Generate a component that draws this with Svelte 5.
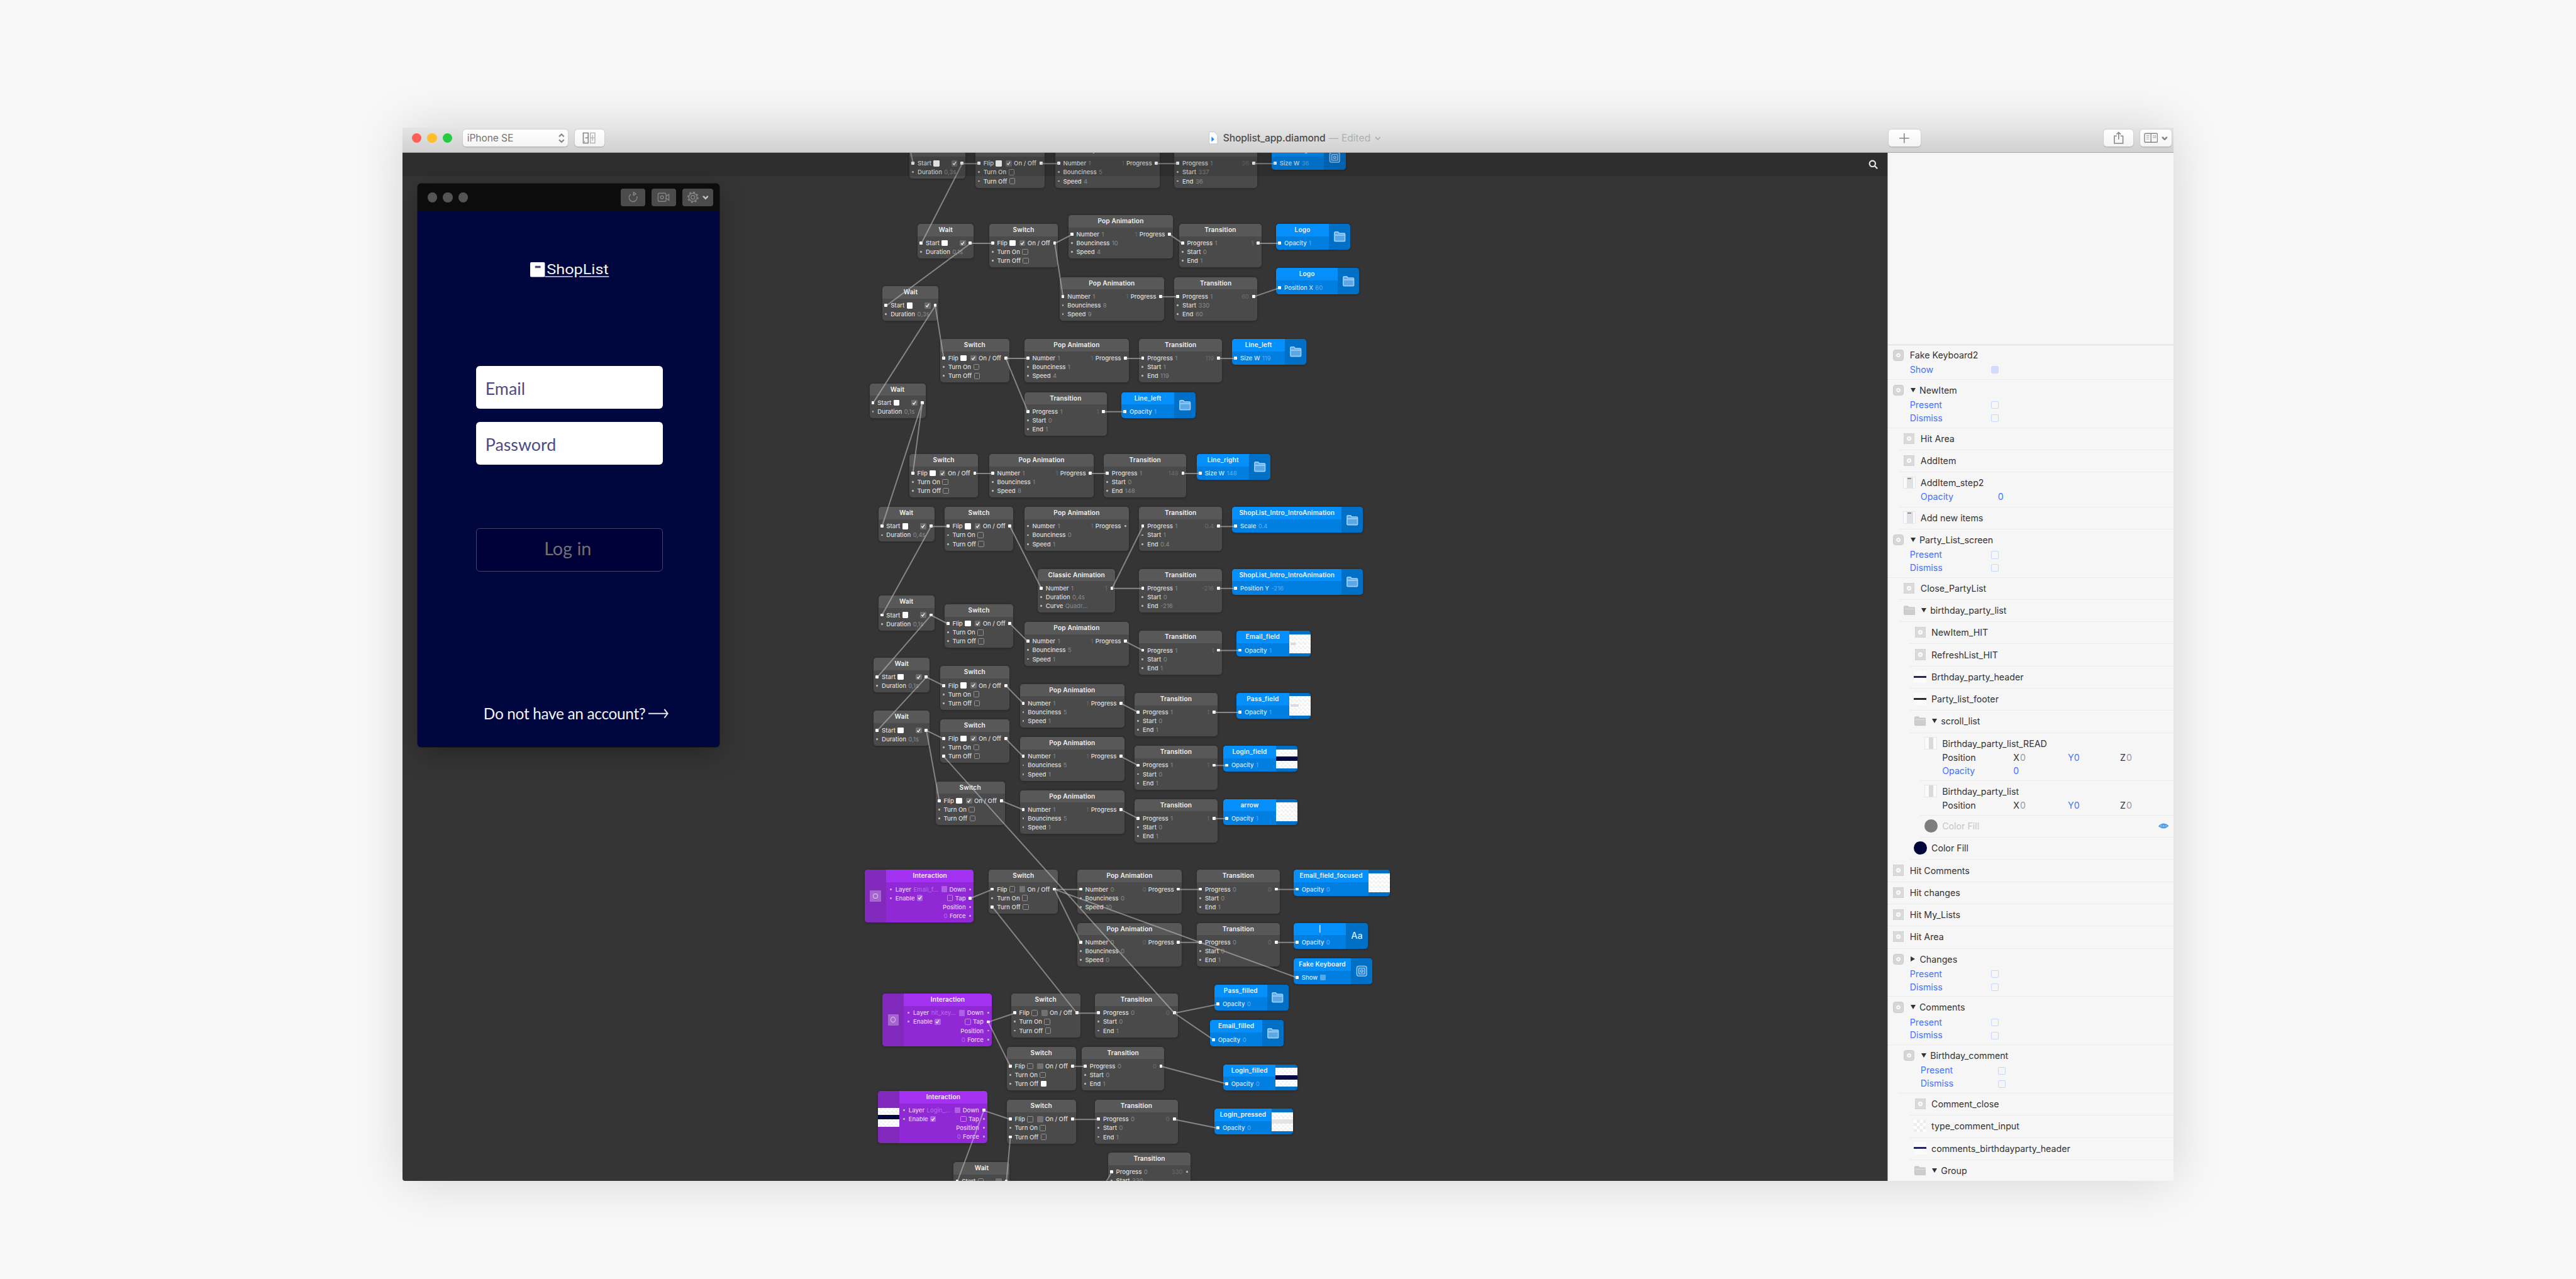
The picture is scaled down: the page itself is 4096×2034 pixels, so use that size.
<script>
  const ROW = 14.43;
  const FIRST = 31.7;
  const WIDTHS = { wait: 91.2, switch: 112.5, pop: 170.8, trans: 134.8, classic: 126.5, inter: 177.8 };

  const box = (id, kind, title, x, y, ins, outs) => ({ id, kind, title, x, y, w: WIDTHS[kind], ins, outs });
  const wait = (id, x, y, dur, start = 'on', out = 'check') =>
    box(id, 'wait', 'Wait', x, y, [{ l: 'Start', b: start }, { l: 'Duration', v: dur }], [{ b: out }]);
  const sw = (id, x, y, flip = 'on', out = 'check', off = 'off') =>
    box(id, 'switch', 'Switch', x, y, [{ l: 'Flip', b: flip }, { l: 'Turn On', b: 'off' }, { l: 'Turn Off', b: off }], [{ b: out, l: 'On / Off' }]);
  const idle = (id, x, y, off) => sw(id, x, y, 'off', 'gray', off);
  const pop = (id, x, y, n, bounce, speed) =>
    box(id, 'pop', 'Pop Animation', x, y, [{ l: 'Number', v: n }, { l: 'Bounciness', v: bounce }, { l: 'Speed', v: speed }], [{ v: n, l: 'Progress' }]);
  const trans = (id, x, y, p, start, end, out) =>
    box(id, 'trans', 'Transition', x, y, [{ l: 'Progress', v: p }, { l: 'Start', v: start }, { l: 'End', v: end }], [{ v: out }]);
  const inter = (id, x, y, layer, icon) => ({
    ...box(id, 'inter', 'Interaction', x, y,
      [{ l: 'Layer', v: layer }, { l: 'Enable', b: 'check' }],
      [{ b: 'gray', l: 'Down' }, { b: 'off', l: 'Tap' }, { l: 'Position' }, { v: '0', l: 'Force' }]),
    icon
  });
  const layer = (id, x, y, title, l, v, icon = 'folder', w = 120.5, b = undefined) =>
    ({ id, kind: 'layer', title, x, y, w, ins: [{ l, v, b }], outs: [], icon });

  const nodes = [
    wait('w0', 1483, 235, '0,3s'), sw('s0', 1590.4, 235), pop('p0', 1720.4, 235, '1', '5', '4'),
    trans('t0', 1914.8, 235, '1', '337', '36', '36'), layer('b0', 2073.4, 235, 'Rectangle', 'Size W', '36', 'frame'),

    wait('w1', 1496.4, 365, '0,1s'), sw('s1', 1612.7, 365), pop('p1', 1741.8, 350.7, '1', '10', '4'),
    trans('t1', 1922.3, 365, '1', '0', '1', '1'), layer('b1', 2080.9, 365, 'Logo', 'Opacity', '1'),
    pop('p2', 1727.3, 452, '1', '8', '9'), trans('t2', 1914.8, 452, '1', '330', '60', '60'),
    layer('b2', 2080.9, 437.3, 'Logo', 'Position X', '60', 'folder', 135),

    wait('w2', 1439.1, 466.7, '0,3s'), sw('s3', 1532.9, 552.7), pop('p3', 1670, 552.7, '1', '1', '4'),
    trans('t3', 1857.5, 552.7, '1', '1', '119', '119'), layer('b3', 2009.1, 552.7, 'Line_left', 'Size W', '119'),
    trans('t4', 1670, 639.5, '1', '0', '1', '1'), layer('b4', 1828.6, 639.5, 'Line_left', 'Opacity', '1'),

    wait('w3', 1417.7, 625.3, '0,1s'), sw('s5', 1482.5, 740.3), pop('p5', 1612.7, 740.3, '1', '1', '8'),
    trans('t5', 1799.6, 740.3, '1', '0', '148', '148'), layer('b5', 1951.3, 740.3, 'Line_right', 'Size W', '148'),

    wait('wE', 1432.1, 826.7, '0,4s'), sw('sE', 1539.8, 826.7), pop('pE', 1670, 826.7, '1', '0', '1'),
    trans('tE', 1857.5, 826.7, '1', '1', '0.4', '0.4'),
    layer('bE', 2009.1, 826.7, 'ShopList_Intro_IntroAnimation', 'Scale', '0.4', 'folder', 213.2),
    box('cF', 'classic', 'Classic Animation', 1692, 927.7, [{ l: 'Number', v: '1' }, { l: 'Duration', v: '0,4s' }, { l: 'Curve', v: 'Quadr...' }], [{ v: '1' }]),
    trans('tF', 1857.5, 927.7, '1', '0', '-216', '-216'),
    layer('bF', 2009.1, 927.7, 'ShopList_Intro_IntroAnimation', 'Position Y', '-216', 'folder', 213.2),

    wait('w4', 1432.1, 971.4, '0,1s'), sw('s4', 1539.8, 985.5), pop('p4', 1670, 1014.3, '1', '5', '1'),
    trans('t4b', 1857.5, 1028.8, '1', '0', '1', '1'), layer('b4b', 2016.1, 1028.8, 'Email_field', 'Opacity', '1', 'email'),

    wait('w5', 1424.6, 1072.4, '0,1s'), sw('s5b', 1532.9, 1086.3), pop('p5b', 1662.7, 1115.4, '1', '5', '1'),
    trans('t5b', 1850, 1129.8, '1', '0', '1', '1'), layer('b5b', 2016.1, 1129.8, 'Pass_field', 'Opacity', '1', 'pass'),

    wait('w6', 1424.6, 1159.2, '0,1s'), sw('s6', 1532.9, 1173), pop('p6', 1662.7, 1202, '1', '5', '1'),
    trans('t6', 1850, 1216.4, '1', '0', '1', '1'), layer('b6', 1994.6, 1216.4, 'Login_field', 'Opacity', '1', 'band'),
    sw('s7', 1525.6, 1274.1), pop('p7', 1662.7, 1288.6, '1', '5', '1'),
    trans('t7', 1850, 1303, '1', '0', '1', '1'), layer('b7', 1994.6, 1303, 'arrow', 'Opacity', '1', 'empty'),

    inter('i1', 1409.9, 1418.5, 'Email_f...', 'hit'), idle('sG', 1612.4, 1418.5), pop('pG', 1756.2, 1418.5, '0', '0', '10'),
    trans('tG', 1951.5, 1418.5, '0', '0', '1', '0'),
    layer('bG', 2109.3, 1418.5, 'Email_field_focused', 'Opacity', '0', 'empty', 157),
    pop('pH', 1756.2, 1505, '0', '0', '0'), trans('tH', 1951.5, 1505, '0', '0', '1', '0'),
    layer('bH', 2109.3, 1505, '|', 'Opacity', '0', 'text'),
    layer('kb', 2109.3, 1562.6, 'Fake Keyboard', 'Show', '', 'frame', 128.2, 'gray'),

    layer('pf', 1980.2, 1605.8, 'Pass_filled', 'Opacity', '0'), layer('ef', 1972.8, 1663.7, 'Email_filled', 'Opacity', '0'),
    inter('i2', 1438.9, 1620.3, 'hit_key...', 'hit'), idle('s9', 1648.7, 1620.3), trans('t9', 1785.4, 1620.3, '0', '0', '1', '0'),
    idle('s10', 1641.5, 1707, 'on'), trans('t10', 1763.7, 1707, '0', '0', '1', '0'),
    layer('b10', 1994.4, 1735.7, 'Login_filled', 'Opacity', '0', 'band'),

    inter('i3', 1431.6, 1779.1, 'Login_...', 'band'), idle('s11', 1641.5, 1793.6), trans('t11', 1785.4, 1793.6, '0', '0', '1', '0'),
    layer('b11', 1980.2, 1808, 'Login_pressed', 'Opacity', '0', 'pale', 128),
    wait('w12', 1555, 1894.9, '0,2s', 'off', 'gray'), trans('t12', 1806.6, 1879.6, '0', '330', '0', '330')
  ];

  /* [source, output row, target, input row] */
  const links = [
    ['w0', 0, 's0', 0], ['w0', 0, 'w1', 0], ['s0', 0, 'p0', 0], ['p0', 0, 't0', 0], ['t0', 0, 'b0', 0],
    ['w1', 0, 's1', 0], ['w1', 0, 'w2', 0], ['s1', 0, 'p1', 0], ['p1', 0, 't1', 0], ['t1', 0, 'b1', 0],
    ['s1', 0, 'p2', 0], ['p2', 0, 't2', 0], ['t2', 0, 'b2', 0],
    ['w2', 0, 's3', 0], ['w2', 0, 'w3', 0], ['s3', 0, 'p3', 0], ['p3', 0, 't3', 0], ['t3', 0, 'b3', 0],
    ['s3', 0, 't4', 0], ['t4', 0, 'b4', 0],
    ['w3', 0, 's5', 0], ['w3', 0, 'wE', 0], ['s5', 0, 'p5', 0], ['p5', 0, 't5', 0], ['t5', 0, 'b5', 0],
    ['wE', 0, 'sE', 0], ['wE', 0, 'w4', 0], ['sE', 0, 'cF', 0], ['cF', 0, 'tE', 0], ['cF', 0, 'tF', 0],
    ['tE', 0, 'bE', 0], ['tF', 0, 'bF', 0],
    ['w4', 0, 's4', 0], ['w4', 0, 'w5', 0], ['s4', 0, 'p4', 0], ['p4', 0, 't4b', 0], ['t4b', 0, 'b4b', 0],
    ['w5', 0, 's5b', 0], ['w5', 0, 'w6', 0], ['s5b', 0, 'p5b', 0], ['p5b', 0, 't5b', 0], ['t5b', 0, 'b5b', 0],
    ['w6', 0, 's6', 0], ['w6', 0, 's7', 0], ['s6', 0, 'p6', 0], ['p6', 0, 't6', 0], ['t6', 0, 'b6', 0],
    ['s7', 0, 'p7', 0], ['p7', 0, 't7', 0], ['t7', 0, 'b7', 0], ['t9', 0, 's6', 2],
    ['i1', 1, 'sG', 0], ['sG', 0, 'pG', 0], ['pG', 0, 'tG', 0], ['tG', 0, 'bG', 0], ['sG', 0, 'pH', 0],
    ['sG', 0, 'kb', 0], ['pH', 0, 'tH', 0], ['tH', 0, 'bH', 0], ['s9', 0, 'sG', 2],
    ['i2', 1, 's9', 0], ['i2', 1, 's10', 0], ['s9', 0, 't9', 0], ['t9', 0, 'pf', 0], ['t9', 0, 'ef', 0],
    ['s10', 0, 't10', 0], ['t10', 0, 'b10', 0],
    ['i3', 0, 's11', 0], ['i3', 0, 'w12', 0], ['s11', 0, 't11', 0], ['t11', 0, 'b11', 0], ['w12', 0, 's11', 2]
  ];

  const OX = 656, OY = 249;
  const byId = Object.fromEntries(nodes.map((n) => [n.id, n]));
  const lit = new Set(['w0:in:0', 't12:in:0']);
  for (const [a, ar, b, br] of links) { lit.add(`${a}:out:${ar}`); lit.add(`${b}:in:${br}`); }
  const inX = (n) => n.x + (n.kind === 'inter' ? 43 : 5.6);
  const wires = links.map(([a, ar, b, br]) => {
    const s = byId[a], t = byId[b];
    return [s.x + s.w - 5.6 - OX, s.y + FIRST + ar * ROW - OY, inX(t) - OX, t.y + FIRST + br * ROW - OY];
  });
  wires.push([1481 - OX, -18, 1488.6 - OX, 235 + FIRST - OY]);
  wires.push([1790 - OX, 1950 - OY, 1812.2 - OX, 1879.6 + FIRST - OY]);

  const nodeHeight = (n) => 27.8 + ROW * Math.max(n.ins.length, n.outs.length);
  const PD = [{ l: 'Present', box: 'off', blue: true }, { l: 'Dismiss', box: 'off', blue: true }];
  const XYZ = { l: 'Position', xyz: true };
  const OP = { l: 'Opacity', v: '0', blue: true };
  const layers = [
    { d: 0, i: 'frame', t: 'Fake Keyboard2', p: [{ l: 'Show', box: 'fill', blue: true }] },
    { d: 0, i: 'frame', t: 'NewItem', a: 'open', p: PD },
    { d: 1, i: 'hit', t: 'Hit Area' },
    { d: 1, i: 'hit', t: 'AddItem' },
    { d: 1, i: 'sheet', t: 'AddItem_step2', p: [OP] },
    { d: 1, i: 'sheet', t: 'Add new items' },
    { d: 0, i: 'frame', t: 'Party_List_screen', a: 'open', p: PD },
    { d: 1, i: 'hit', t: 'Close_PartyList' },
    { d: 1, i: 'folder', t: 'birthday_party_list', a: 'open' },
    { d: 2, i: 'hit', t: 'NewItem_HIT' },
    { d: 2, i: 'hit', t: 'RefreshList_HIT' },
    { d: 2, i: 'navy', t: 'Brthday_party_header' },
    { d: 2, i: 'dark', t: 'Party_list_footer' },
    { d: 2, i: 'folder', t: 'scroll_list', a: 'open' },
    { d: 3, i: 'column', t: 'Birthday_party_list_READ', p: [XYZ, OP] },
    { d: 3, i: 'column', t: 'Birthday_party_list', p: [XYZ] },
    { d: 3, i: 'gray', t: 'Color Fill', hidden: true },
    { d: 2, i: 'ink', t: 'Color Fill' },
    { d: 0, i: 'hit', t: 'Hit Comments' },
    { d: 0, i: 'hit', t: 'Hit changes' },
    { d: 0, i: 'hit', t: 'Hit My_Lists' },
    { d: 0, i: 'hit', t: 'Hit Area' },
    { d: 0, i: 'frame', t: 'Changes', a: 'closed', p: PD },
    { d: 0, i: 'frame', t: 'Comments', a: 'open', p: PD },
    { d: 1, i: 'frame', t: 'Birthday_comment', a: 'open', p: PD },
    { d: 2, i: 'hit', t: 'Comment_close' },
    { d: 2, i: 'checker', t: 'type_comment_input' },
    { d: 2, i: 'navy', t: 'comments_birthdayparty_header' },
    { d: 2, i: 'folder', t: 'Group', a: 'open' }
  ];
</script>

{#snippet toggle(kind)}
  <span class="tg {kind}">
    {#if kind === 'check'}<svg viewBox="0 0 10 10"><path d="M2.4 5.4 4.3 7.5 7.6 2.4" /></svg>{/if}
  </span>
{/snippet}

{#snippet nodeIcon(kind)}
  {#if kind === 'folder'}
    <svg class="nicon" viewBox="0 0 22 20"><path d="M2 3.6Q2 2 3.4 2H8l2 2.4h8.4Q20 4.4 20 6V16.4Q20 18 18.600 18H3.400Q2 18 2 16.400Z" /><path d="M2.400 7.400H19.600" /></svg>
  {:else if kind === 'frame'}
    <svg class="nicon tall" viewBox="0 0 20 20"><rect x="1.5" y="1.5" width="17" height="17" rx="3.5" /><rect x="5" y="5" width="10" height="10" rx="1" /><circle cx="10" cy="10" r="2" /></svg>
  {:else if kind === 'hit'}
    <span class="hitbox"><i></i></span>
  {:else if kind === 'text'}
    <span class="aa">Aa</span>
  {:else}
    <span class="thumb {kind}"><i></i></span>
  {/if}
{/snippet}

<div class="page">
  <main class="window">
    <header class="titlebar">
      <div class="left">
        <div class="lights"><i class="close"></i><i class="min"></i><i class="max"></i></div>
        <div class="tb select"><span>iPhone SE</span>
          <svg width="12" height="18" viewBox="0 0 12 18"><path d="M2 6.5 6 2.5l4 4M2 11.5l4 4 4-4" /></svg>
        </div>
        <div class="tb view">
          <svg width="22" height="20" viewBox="0 0 22 20"><rect x="1.5" y="1.5" width="8" height="16.5" /><path d="M9.500 5v3M4.500 9.500h5M3 15.500h1" /><rect class="thin" x="13" y="1.500" width="7.500" height="16.500" /><path class="thin" d="M13 9.500h7M16.700 5v9" /></svg>
        </div>
      </div>
      <div class="doc">
        <svg width="15" height="21" viewBox="0 0 15 21"><path class="paper" d="M.7.7H9L14.300 6V20.300H.7Z" /><path class="play" d="M4.500 8.500 9 12.700 4.500 17Z" /></svg>
        <b>Shoplist_app.diamond</b><span class="dash">—</span><span class="edited">Edited</span>
        <svg class="chev" width="10" height="8" viewBox="0 0 10 8"><path d="M1 2l4 4 4-4" /></svg>
      </div>
      <div class="right">
        <div class="tb plus"><svg width="18" height="18" viewBox="0 0 18 18"><path d="M9 1v16M1 9h16" /></svg></div>
        <div class="tb share"><svg width="18" height="21" viewBox="0 0 18 21"><path d="M6 7.500H2V19.500H16V7.500H12M9 13V1.500M5.500 4.800 9 1.500l3.500 3.300" /></svg></div>
        <div class="tb book">
          <svg width="23" height="17" viewBox="0 0 24 17"><rect x="1" y="1" width="22" height="15" rx="2" /><path d="M12 1v15" /><path class="thin" d="M4 4.500h5M4 7.500h5M4 10.500h5M15 5h5v3h-5" /></svg>
          <svg width="10" height="8" viewBox="0 0 10 8"><path class="bold" d="M1 2l4 4 4-4" /></svg>
        </div>
      </div>
    </header>

    <div class="body">
      <section class="canvas">
        {#each nodes as n (n.id)}
          <div class="node {n.kind}" style:left="{n.x - OX}px" style:top="{n.y - OY}px" style:width="{n.w}px" style:height="{nodeHeight(n)}px">
            {#if n.kind === 'inter'}<div class="side">{@render nodeIcon(n.icon)}</div>{/if}
            <div class="main">
              <div class="title">{n.title}</div>
              <div class="io">
                <div class="ins">
                  {#each n.ins as p, r}
                    <div class="port"><i class="pin" class:lit={lit.has(`${n.id}:in:${r}`)}></i><span>{p.l}</span>{#if p.b}{@render toggle(p.b)}{/if}{#if p.v}<em>{p.v}</em>{/if}</div>
                  {/each}
                </div>
                <div class="outs">
                  {#each n.outs as p, r}
                    <div class="port">{#if p.v}<em>{p.v}</em>{/if}{#if p.b}{@render toggle(p.b)}{/if}{#if p.l}<span>{p.l}</span>{/if}<i class="pin" class:lit={lit.has(`${n.id}:out:${r}`)}></i></div>
                  {/each}
                </div>
              </div>
            </div>
            {#if n.kind === 'layer'}<div class="side">{@render nodeIcon(n.icon)}</div>{/if}
          </div>
        {/each}
        <svg class="wires" width="2421" height="1677" viewBox="0 0 2421 1677">
          {#each wires as [x1, y1, x2, y2]}<line {x1} {y1} {x2} {y2} />{/each}
        </svg>
        <div class="searchbar">
          <svg width="16" height="16" viewBox="0 0 16 16"><circle cx="6.500" cy="6.500" r="4.800" /><path d="M10.200 10.200 14.500 14.500" /></svg>
        </div>

        <div class="phone">
          <div class="phonebar">
            <div class="lights"><i></i><i></i><i></i></div>
            <div class="pbtns">
              <span><svg width="18" height="20" viewBox="0 0 18 20"><path d="M5 5.200A6.500 6.500 0 1 0 15 8.500M9.500 1.200v6M9.500 1.500l4 3-4 2.500" /></svg></span>
              <span><svg width="21" height="18" viewBox="0 0 22 18"><rect x="1.500" y="2" width="13.500" height="14" rx="2" /><circle cx="8.200" cy="9" r="2.600" /><path d="M15 7.500 20 4v10l-5-3.500" /></svg></span>
              <span class="wide">
                <svg width="20" height="20" viewBox="0 0 20 20"><circle cx="10" cy="10" r="3" /><circle cx="10" cy="10" r="6.600" /><circle class="teeth" cx="10" cy="10" r="8.200" /></svg>
                <svg width="10" height="8" viewBox="0 0 10 8"><path class="arrow" d="M1 2l4 4 4-4" /></svg>
              </span>
            </div>
          </div>
          <div class="screen">
            <svg class="logo" width="130" height="30" viewBox="0 0 130 30">
              <rect class="tile" x="0" y="1" width="24" height="24" rx="2" /><rect class="slot" x="8" y="7" width="9" height="3.500" />
              <text x="27" y="20.500" textLength="101" lengthAdjust="spacingAndGlyphs">ShopList</text>
              <path d="M24 24.500H69.500M80 24.500H128.500" />
            </svg>
            <div class="field">Email</div>
            <div class="field second">Password</div>
            <div class="login">Log in</div>
            <div class="signup"><span>Do not have an account?</span>
              <svg width="33" height="18" viewBox="0 0 33 18"><path d="M0 9H31M26 2 31.500 9 26 16" /></svg>
            </div>
          </div>
        </div>
      </section>

      <aside>
        <div class="preview"></div>
        <div class="list">
          {#each layers as r}
            <div class="item d{r.d} n{r.p ? r.p.length : 0}" class:pd={r.p === PD} class:off={r.hidden}>
              <div class="head">
                <span class="ic">
                  {#if r.i === 'folder'}
                    <svg width="19" height="16" viewBox="0 0 19 16"><path class="fold" d="M.5 2.500Q.5 1 2 1H7L8.500 3H17Q18.500 3 18.500 4.500V13.500Q18.500 15 17 15H2Q.5 15 .5 13.500Z" /><path class="foldline" d="M1 5.500H18" /></svg>
                  {:else}<i class="glyph {r.i}"></i>{/if}
                </span>
                {#if r.a}<i class="tri {r.a}"></i>{/if}
                <span class="name">{r.t}</span>
                {#if r.hidden}<svg class="eye" width="17" height="12" viewBox="0 0 17 12"><path d="M1 6Q8 -1 16 5.500Q9 12 1 6Z" /><circle cx="8.500" cy="5.800" r="2.400" /></svg>{/if}
              </div>
              {#each r.p ?? [] as p}
                <div class="prop" class:blue={p.blue}>
                  <span class="key">{p.l}</span>
                  {#if p.box}<i class="cb {p.box}"></i>{/if}
                  {#if p.v}<span>{p.v}</span>{/if}
                  {#if p.xyz}<span class="ax">X<em>0</em></span><span class="ay">Y0</span><span class="az">Z<em>0</em></span>{/if}
                </div>
              {/each}
            </div>
          {/each}
        </div>
      </aside>
    </div>
  </main>
</div>

<style>
  :global(body) { margin: 0; background: #f8f8f8; overflow: hidden; }
  .page { zoom: 0.975238; width: 4200px; height: 2086px; box-sizing: border-box; padding: 208px 656px 160px; background: #f8f8f8; font-family: Inter, "Liberation Sans", sans-serif; overflow: hidden; }
  .window { width: 2888px; height: 1718px; display: flex; flex-direction: column; border-radius: 0 0 4px 4px; box-shadow: 0 0 84px rgba(0, 0, 0, 0.150); }
  svg { display: block; fill: none; flex: none; }

  .titlebar { height: 41px; box-sizing: border-box; border-bottom: 1.500px solid #a9a9a9; background: linear-gradient(#e4e4e4, #d1d1d1); display: grid; grid-template-columns: 1fr auto 1fr; align-items: start; padding: 3px 3px 0 15.600px; }
  .left, .right, .doc { display: flex; align-items: center; height: 28px; }
  .lights { display: flex; gap: 9.400px; }
  .lights i { width: 15.700px; height: 15.700px; border-radius: 50%; background: #545454; }
  .lights .close { background: #ff5f57; }
  .lights .min { background: #ffbd2e; }
  .lights .max { background: #28ca42; }
  .tb { height: 27.500px; box-sizing: border-box; border-radius: 5px; background: linear-gradient(#fff, #f4f4f4); box-shadow: 0 0.500px 2px rgba(0, 0, 0, 0.220); display: flex; align-items: center; justify-content: center; }
  .tb svg { stroke: #858585; stroke-width: 1.600; }
  .tb .thin { stroke: #b8b8b8; }
  .tb .bold { stroke-width: 2.600; }
  .select { width: 171.500px; margin-left: 17.200px; padding: 0 5px 0 7px; justify-content: space-between; font-size: 16px; letter-spacing: -0.100px; color: #757575; }
  .select svg { stroke-width: 2.200; }
  .view { width: 48.200px; margin-left: 10.700px; }
  .doc { font-size: 16px; padding-left: 10px; }
  .doc b { font-weight: 500; color: #4c4c4c; margin-left: 8px; letter-spacing: -0.100px; }
  .dash, .edited { color: #b0b0b0; }
  .dash { margin: 0 5px; }
  .chev { stroke: #b0b0b0; stroke-width: 2; margin-left: 7px; }
  .paper { fill: #fff; stroke: #c4c4c4; stroke-width: 1; }
  .play { fill: #1488f5; }
  .right { width: 462px; justify-self: end; justify-content: flex-end; }
  .plus { width: 52.300px; margin-right: auto; }
  .share { width: 48.700px; margin-right: 10.500px; }
  .book { width: 52px; gap: 6px; }
  .book svg { stroke-width: 1.500; }

  .body { flex: 1; display: flex; min-height: 0; border-radius: 0 0 4px 4px; overflow: hidden; }
  .canvas { position: relative; width: 2421px; height: 1677px; flex: none; background: #353535; overflow: hidden; }
  .searchbar { position: absolute; inset: 0 0 auto 0; height: 38px; box-sizing: border-box; padding: 11px 15px 0 0; display: flex; justify-content: flex-end; background: rgba(0, 0, 0, 0.120); }
  .searchbar svg { stroke: #e8e8e8; stroke-width: 2.200; }
  .wires { position: absolute; left: 0; top: 0; }
  .wires line { stroke: #c8c8c8; stroke-opacity: 0.550; stroke-width: 2; }

  .node { position: absolute; display: flex; border-radius: 5px; overflow: hidden; background: #4a4a4a; box-shadow: 0 1px 4px rgba(0, 0, 0, 0.300); color: #dedede; font-size: 9.800px; font-weight: 500; --head: #585858; --side: #444; --dim: #8a8a8a; --faint: #6c6c6c; }
  .node.layer { background: #007fe0; color: #d3e9ff; --head: #048ffa; --side: #0070c6; --dim: #5cb2f7; }
  .node.inter { background: #9128d6; color: #e7cdfa; --head: #a331f1; --side: #8029bb; --dim: #b76bea; --faint: #b76bea; }
  .main { flex: 1; min-width: 0; }
  .title { height: 20.200px; line-height: 20.200px; text-align: center; background: var(--head); color: #f2f2f2; font-weight: 600; font-size: 10.400px; letter-spacing: 0.150px; white-space: nowrap; }
  .io { display: flex; justify-content: space-between; padding-top: 4.100px; }
  .port { display: flex; align-items: center; height: 14.430px; white-space: nowrap; gap: 3.500px; }
  .ins { padding-left: 3.600px; width: 0; }
  .inter .ins { padding-left: 5.500px; }
  .outs { padding-right: 3.600px; }
  .outs .port { justify-content: flex-end; }
  .pin { width: 4px; height: 4px; flex: none; position: relative; margin: 0 2px 0 0; }
  .outs .pin { margin: 0 0 0 2px; }
  .pin::after { content: ""; position: absolute; inset: 0.500px; border-radius: 1px; background: #b4b4b4; }
  .pin.lit::after { inset: -0.500px; background: #fff; }
  em { font-style: normal; color: var(--dim); font-weight: 400; }
  .outs em { color: var(--faint); }
  .tg { width: 9.600px; height: 9.600px; box-sizing: border-box; border-radius: 1.500px; flex: none; }
  .tg.on { background: #fff; }
  .tg.off { border: 1px solid #949494; }
  .tg.gray { background: #727272; }
  .tg.check { background: #6c6c6c; }
  .tg.check svg { width: 100%; height: 100%; stroke: #fff; stroke-width: 1.400; }
  .inter .tg.off { border-color: #c78eee; }
  .inter .tg.gray, .inter .tg.check { background: #ad60e3; }
  .layer .tg.gray { background: #52a9ee; }
  .side { width: 35px; flex: none; background: var(--side); display: flex; align-items: center; justify-content: center; }
  .nicon { width: 21px; height: 19px; stroke: #9ccdf7; stroke-width: 1.800; fill: #5ba8e8; }
  .nicon.tall { width: 19px; height: 19px; stroke-width: 1.500; fill: #1c80d0; }
  .aa { color: #d3e9ff; font-size: 15px; }
  .hitbox { width: 18px; height: 18px; background: #a566cf; display: flex; align-items: center; justify-content: center; border-radius: 1px; }
  .hitbox i { width: 6px; height: 7px; border: 1.500px solid #e3c8f6; border-radius: 50%; }
  .thumb { width: 35px; height: 31px; flex: none; background: #fff repeating-conic-gradient(#f0f2f1 0 25%, #fff 0 50%) 0 0 / 7px 7px; display: flex; align-items: center; }
  .thumb.email i, .thumb.pass i { width: 8px; height: 4px; margin-left: 3px; background: #dcd9e6; }
  .thumb.pass i { width: 13px; }
  .thumb.band i { width: 100%; height: 7px; background: #04063f; }
  .thumb.pale i { width: 100%; height: 7px; background: #e4e4e4; }

  .phone { position: absolute; left: 25.200px; top: 50.500px; width: 491.800px; height: 918.500px; border-radius: 6px; overflow: hidden; background: #00073f; box-shadow: 0 0 0 1px rgba(0, 0, 0, 0.350), 0 12px 44px rgba(0, 0, 0, 0.280); display: flex; flex-direction: column; }
  .phonebar { height: 45.200px; box-sizing: border-box; padding: 0 10.500px 0 16px; background: #0c0c0c; display: flex; align-items: center; justify-content: space-between; }
  .pbtns { display: flex; gap: 10px; }
  .pbtns span { width: 40px; height: 28px; border-radius: 4px; background: #4b4b4b; display: flex; align-items: center; justify-content: center; gap: 5px; }
  .pbtns .wide { width: 50px; }
  .pbtns svg { stroke: #858585; stroke-width: 1.500; }
  .pbtns .arrow { stroke: #c4c4c4; stroke-width: 2.400; }
  .pbtns .teeth { stroke-dasharray: 3.220 3.220; stroke-width: 2; }
  .screen { flex: 1; display: flex; flex-direction: column; align-items: stretch; padding: 0 92px 0 95.200px; font-family: Lato, sans-serif; }
  .logo { margin: 81.500px 0 0 88px; }
  .logo .tile { fill: #fff; }
  .logo .slot { fill: #4f4a7a; }
  .logo text { font: 400 23.500px Roboto, sans-serif; fill: #f4f4f6; }
  .logo path { stroke: #b9bace; stroke-width: 2; }
  .field { height: 70px; box-sizing: border-box; margin-top: 140.500px; border-radius: 6px; background: #fff; color: #4c4c82; font-size: 27.500px; line-height: 74px; padding-left: 15px; }
  .field.second { margin-top: 21.500px; }
  .login { height: 70.500px; box-sizing: border-box; margin-top: 103px; border: 2px solid #44466b; border-radius: 6px; background: #000038; color: #716f72; font-size: 29.500px; line-height: 64px; text-align: center; padding-right: 6px; }
  .signup { display: flex; align-items: center; gap: 5px; margin: 211.500px -10px 0 12px; height: 40px; color: #f4f4f8; font-size: 25px; letter-spacing: -0.320px; white-space: nowrap; }
  .signup svg { stroke: #e6e6ee; stroke-width: 2; }

  aside { flex: 1; min-width: 0; background: #f6f6f6; border-left: 1px solid #a5a5a5; box-sizing: border-box; display: flex; flex-direction: column; overflow: hidden; }
  .preview { height: 314px; flex: none; box-sizing: border-box; border-bottom: 2px solid #d4d4d4; }
  .list { font-size: 14.600px; color: #333; --dim: #999; margin-top: -0.700px; }
  .item { height: 36.180px; box-sizing: border-box; padding-left: 8.600px; --col: 132.600px; border-bottom: 1px solid #ebebeb; }
  .item.n1 { height: 56.800px; }
  .item.n2 { height: 77.900px; }
  .item.pd { height: 78.750px; }
  .item.d1 { margin-left: 17.600px; --col: 126px; }
  .item.d2 { margin-left: 35.200px; }
  .item.d3 { margin-left: 52.800px; --col: 116px; }
  .head { display: flex; align-items: center; height: 24px; padding-top: 5px; }
  .ic { width: 17.600px; height: 18px; display: flex; align-items: center; justify-content: center; margin-right: 9.600px; flex: none; }
  .fold { fill: #cdcdcd; stroke: #c2c2c2; }
  .foldline { stroke: #e2e2e2; }
  .glyph { width: 17.600px; height: 17.600px; flex: none; box-sizing: border-box; }
  .glyph.frame { border: 1.500px solid #cacaca; border-radius: 4px; background: radial-gradient(circle, #cfcfcf 0 0.800px, #fafafa 1.500px 3px, #d6d6d6 3.800px); }
  .glyph.hit { border: 1px dashed #d0d0d0; background: radial-gradient(circle, #e6e6e6 0 1.200px, #fbfbfb 2px 3.300px, #dadada 4.200px); }
  .glyph.sheet, .glyph.column, .glyph.checker, .glyph.navy, .glyph.dark { width: 21px; height: 20px; }
  .glyph.checker { background: #fff repeating-conic-gradient(#ececec 0 25%, #fff 0 50%) 0 0 / 10px 10px; }
  .glyph.sheet { background: linear-gradient(#8b8b9c, #8b8b9c) 7px 1px / 6px 2px no-repeat, linear-gradient(90deg, transparent 5px, #e2e2e5 5px 15px, transparent 15px), #fbfbfb; border: 1px solid #e4e8e8; }
  .glyph.column { background: linear-gradient(90deg, transparent 6px, #d9d9de 6px 13px, transparent 13px), #fbfbfb; border: 1px solid #e4e8e8; }
  .glyph.navy { background: linear-gradient(transparent 8.500px, #23235f 8.500px 11.500px, transparent 11.500px), #fbfbfb; }
  .glyph.dark { background: linear-gradient(transparent 8.500px, #2b2b2b 8.500px 11.500px, transparent 11.500px), #fbfbfb; }
  .glyph.gray, .glyph.ink { width: 21.500px; height: 21.500px; border-radius: 50%; background: #7d7d7d; }
  .glyph.ink { background: #00053a; }
  .tri { margin: 0 6.500px 0 1px; flex: none; }
  .tri.open { border: 4.800px solid transparent; border-top: 7.500px solid #333; border-bottom: 0; }
  .tri.closed { border: 4.500px solid transparent; border-left: 8px solid #333; border-right: 0; margin: 0 7.500px 0 1.500px; }
  .off .name { color: #c6c6c6; }
  .eye { margin: 0 8px 0 auto; stroke: #4a9be0; stroke-width: 1.500; fill: #8fc2ee; }
  .prop { display: flex; align-items: center; height: 21.400px; margin-left: 27.200px; }
  .pd .prop { position: relative; top: 1px; }
  .blue, .ay { color: #4372ff; }
  .key { width: var(--col); flex: none; }
  .ax { width: 89px; }
  .ay { width: 85px; }
  .ax em, .az em { margin-left: 1px; }
  .cb { width: 12.500px; height: 12.500px; box-sizing: border-box; border: 2px solid #c6d5fb; border-radius: 2px; margin-top: 2px; }
  .cb.fill { background: #d0dcfa; border-color: #d0dcfa; }
</style>
